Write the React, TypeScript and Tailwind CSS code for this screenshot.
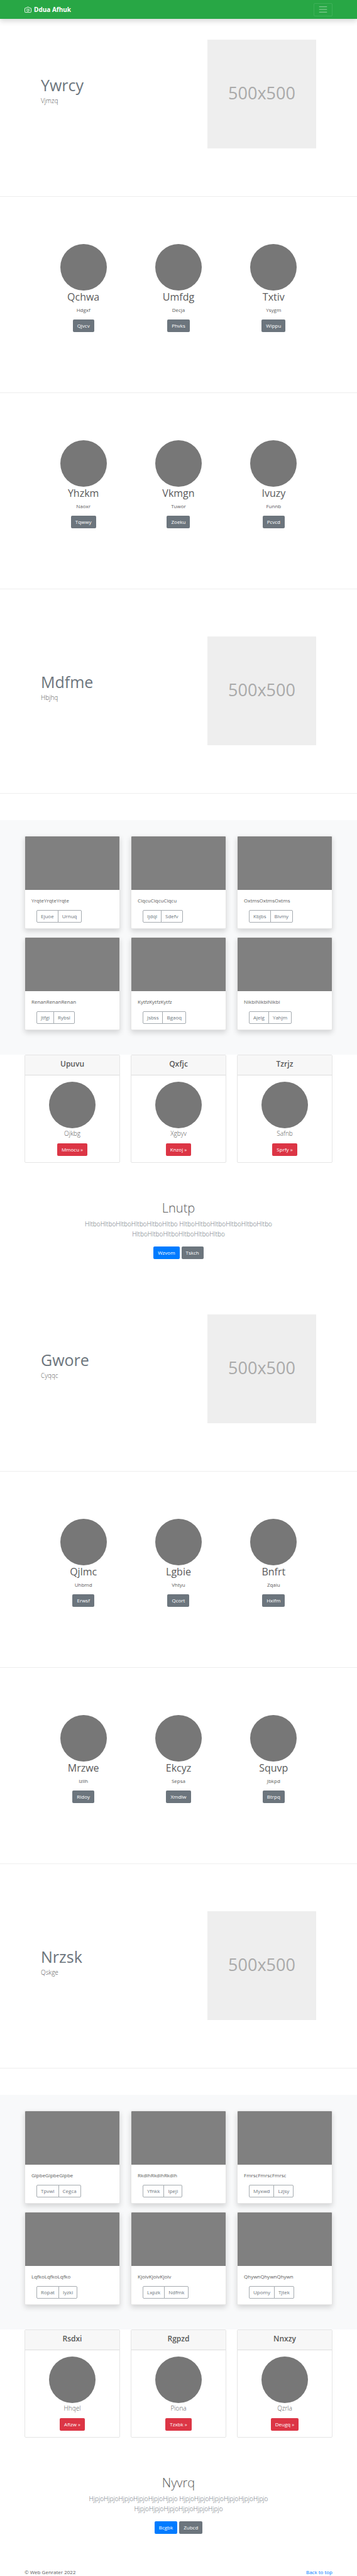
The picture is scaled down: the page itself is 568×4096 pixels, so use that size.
import React from "react";

type Person = { title: string; text: string; action: string };
type Tile = { text: string; view: string; edit: string };
type Message = { title: string; lines: string[]; primary: string; secondary: string };

type Block = {
  intro: { title: string; text: string };
  teams: Person[][];
  feature: { title: string; text: string };
  tiles: Tile[];
  plans: Person[];
  message: Message;
};

const blocks: Block[] = [
  {
    intro: { title: "Ywrcy", text: "Vjmzq" },
    teams: [
      [
        { title: "Qchwa", text: "Hdgxf", action: "Qjvcv" },
        { title: "Umfdg", text: "Decja", action: "Phvks" },
        { title: "Txtiv", text: "Ysygm", action: "Wippu" },
      ],
      [
        { title: "Yhzkm", text: "Naoxr", action: "Tqwwy" },
        { title: "Vkmgn", text: "Tuwor", action: "Zoeku" },
        { title: "Ivuzy", text: "Funnb", action: "Pcvcd" },
      ],
    ],
    feature: { title: "Mdfme", text: "Hbjhq" },
    tiles: [
      { text: "YrqteYrqteYrqte", view: "Ejuoe", edit: "Urnuq" },
      { text: "CiqcuCiqcuCiqcu", view: "Ijdql", edit: "Sdefv" },
      { text: "OxtmsOxtmsOxtms", view: "Kbjbs", edit: "Bivmy" },
      { text: "RenanRenanRenan", view: "Jtfgi", edit: "Rybsl" },
      { text: "KytfzKytfzKytfz", view: "Jsbss", edit: "Bgaoq" },
      { text: "NikbiNikbiNikbi", view: "Ajelg", edit: "Yahjm" },
    ],
    plans: [
      { title: "Upuvu", text: "Ojkbg", action: "Mmocu »" },
      { title: "Qxfjc", text: "Xgbyv", action: "Knzoj »" },
      { title: "Tzrjz", text: "Safnb", action: "Sprfy »" },
    ],
    message: {
      title: "Lnutp",
      lines: [
        "HltboHltboHltboHltboHltboHltbo",
        "HltboHltboHltboHltboHltboHltbo",
        "HltboHltboHltboHltboHltboHltbo",
      ],
      primary: "Wzvom",
      secondary: "Tskch",
    },
  },
  {
    intro: { title: "Gwore", text: "Cyqqc" },
    teams: [
      [
        { title: "Qjlmc", text: "Uhbmd", action: "Erwsf" },
        { title: "Lgbie", text: "Vhtyu", action: "Qcort" },
        { title: "Bnfrt", text: "Zqaiu", action: "Hxifm" },
      ],
      [
        { title: "Mrzwe", text: "Izllh", action: "Rldoy" },
        { title: "Ekcyz", text: "Sepsa", action: "Xmdlw" },
        { title: "Squvp", text: "Jbkpd", action: "Btrpq" },
      ],
    ],
    feature: { title: "Nrzsk", text: "Qskge" },
    tiles: [
      { text: "GlpbeGlpbeGlpbe", view: "Tpvwl", edit: "Cegca" },
      { text: "RkdihRkdihRkdih", view: "Yfnkk", edit: "Ipeji" },
      { text: "FmrscFmrscFmrsc", view: "Myxwd", edit: "Lzjsy" },
      { text: "LqfkoLqfkoLqfko", view: "Ropat", edit: "Iyzki" },
      { text: "KjoivKjoivKjoiv", view: "Lxpzk", edit: "Ndfmk" },
      { text: "QhywnQhywnQhywn", view: "Upomy", edit: "Tjtek" },
    ],
    plans: [
      { title: "Rsdxi", text: "Hhqel", action: "Afizw »" },
      { title: "Rgpzd", text: "Piona", action: "Tzxbk »" },
      { title: "Nnxzy", text: "Qzrla", action: "Deugq »" },
    ],
    message: {
      title: "Nyvrq",
      lines: [
        "HjpjoHjpjoHjpjoHjpjoHjpjoHjpjo",
        "HjpjoHjpjoHjpjoHjpjoHjpjoHjpjo",
        "HjpjoHjpjoHjpjoHjpjoHjpjoHjpjo",
      ],
      primary: "Bcgbk",
      secondary: "Zubcd",
    },
  },
];

const buttonTones = {
  gray: "bg-[#6c757d]",
  blue: "bg-[#007bff]",
  red: "bg-[#dc3545]",
};

function Button({ tone, children }: { tone: keyof typeof buttonTones; children: React.ReactNode }) {
  return (
    <button type="button" className={`h-5 rounded-[2px] px-[7px] text-[8px] leading-3 text-white ${buttonTones[tone]}`}>
      {children}
    </button>
  );
}

function Divider() {
  return <hr className="border-t border-[#eeeeee]" />;
}

function Circle() {
  return <div className="size-[74px] rounded-full bg-[#777777]" />;
}

function Header() {
  return (
    <header className="flex h-[30px] items-center justify-between bg-[#28a745] px-[39px] shadow-[0_4px_8px_rgba(0,0,0,0.15)]">
      <a href="#" className="flex items-center gap-1 text-[10px] leading-4 font-bold text-white">
        <svg
          viewBox="0 0 24 24"
          className="size-[11px]"
          fill="none"
          stroke="currentColor"
          strokeWidth="2"
          strokeLinecap="round"
          strokeLinejoin="round"
          aria-hidden="true"
        >
          <path d="M23 19a2 2 0 0 1-2 2H3a2 2 0 0 1-2-2V8a2 2 0 0 1 2-2h4l2-3h6l2 3h4a2 2 0 0 1 2 2z" />
          <circle cx="12" cy="13" r="4" />
        </svg>
        Ddua Afhuk
      </a>
      <button
        type="button"
        aria-label="Toggle navigation"
        className="flex h-[21px] w-[30px] items-center justify-center rounded-[2px] border border-white/10"
      >
        <svg viewBox="0 0 30 30" className="size-4" stroke="rgba(255,255,255,0.5)" strokeWidth="2" strokeLinecap="round">
          <path d="M4 7h22M4 15h22M4 23h22" />
        </svg>
      </button>
    </header>
  );
}

function Feature({ title, text, lead }: { title: string; text: string; lead?: boolean }) {
  return (
    <>
      <section className={`flex items-start justify-between pr-[65px] pb-[76px] pl-[65px] ${lead ? "pt-[33px]" : "pt-[75px]"}`}>
        <div className="pt-[57px]">
          <h2 className="mb-[2px] text-[25px] leading-[30px] text-[#6c757d]">{title}</h2>
          <p className="text-[10px] leading-4 font-light">{text}</p>
        </div>
        <div className="flex size-[173px] items-center justify-center bg-[#eeeeee] pb-1 text-[27px] leading-8 text-[#aaaaaa]">
          500x500
        </div>
      </section>
      <Divider />
    </>
  );
}

function Team({ people }: { people: Person[] }) {
  return (
    <>
      <section className="grid grid-cols-3 px-[57px] pt-[75px] pb-24">
        {people.map((p) => (
          <div key={p.title} className="flex flex-col items-center">
            <Circle />
            <h3 className="mb-1 text-[16px] leading-[21px]">{p.title}</h3>
            <p className="mb-[9px] text-[8px] leading-3">{p.text}</p>
            <Button tone="gray">{p.action}</Button>
          </div>
        ))}
      </section>
      <Divider />
    </>
  );
}

function Album({ tiles }: { tiles: Tile[] }) {
  return (
    <section className="mt-[42px] grid grid-cols-3 gap-x-[17px] gap-y-[13px] bg-[#f8f9fa] px-[39px] pt-[25px] pb-[39px]">
      {tiles.map((t) => (
        <article
          key={t.text}
          className="overflow-hidden rounded-[2px] border border-black/10 bg-white shadow-[0_4px_8px_rgba(0,0,0,0.15)]"
        >
          <div className="h-[85px] bg-[#808080]" />
          <div className="px-[10px] pt-[11px] pb-[9px]">
            <p className="mb-[9px] text-[8px] leading-3">{t.text}</p>
            <div className="ml-2 flex text-[8px] leading-3 text-[#6c757d]">
              <button type="button" className="h-5 rounded-l-[2px] border border-[#a5abb0] px-[6px]">
                {t.view}
              </button>
              <button type="button" className="-ml-px h-5 rounded-r-[2px] border border-[#a5abb0] px-[6px]">
                {t.edit}
              </button>
            </div>
          </div>
        </article>
      ))}
    </section>
  );
}

function Plans({ plans }: { plans: Person[] }) {
  return (
    <section className="grid grid-cols-3 gap-x-[17px] px-[39px]">
      {plans.map((p) => (
        <article key={p.title} className="overflow-hidden rounded-[2px] border border-black/10">
          <h4 className="border-b border-black/10 bg-[#f7f7f7] pt-[6px] pb-[10px] text-center text-[12px] leading-[15px] font-semibold">
            {p.title}
          </h4>
          <div className="flex flex-col items-center py-[10px]">
            <Circle />
            <p className="mb-2 text-[10px] leading-4 font-light">{p.text}</p>
            <Button tone="red">{p.action}</Button>
          </div>
        </article>
      ))}
    </section>
  );
}

function Hero({ title, lines, primary, secondary }: Message) {
  return (
    <section className="px-[130px] pt-[59px] pb-[55px] text-center">
      <h1 className="mb-1 text-[20px] leading-[26px] font-light">{title}</h1>
      <p className="mb-3 text-[10px] leading-4 font-light text-[#6c757d]">{lines.join(" ")}</p>
      <div className="flex justify-center gap-[3px]">
        <Button tone="blue">{primary}</Button>
        <Button tone="gray">{secondary}</Button>
      </div>
    </section>
  );
}

export default function App() {
  return (
    <div className="bg-white font-['Open_Sans','Noto_Sans',sans-serif] text-[#5a5a5a]">
      <Header />
      <main>
        {blocks.map((b) => (
          <React.Fragment key={b.intro.title}>
            <Feature {...b.intro} lead />
            {b.teams.map((people) => (
              <Team key={people[0].title} people={people} />
            ))}
            <Feature {...b.feature} />
            <Album tiles={b.tiles} />
            <Plans plans={b.plans} />
            <Hero {...b.message} />
          </React.Fragment>
        ))}
      </main>
      <footer className="flex justify-between px-[39px] text-[8px] leading-3">
        <p>© Web Genrater 2022</p>
        <a href="#" className="text-[#007bff]">
          Back to top
        </a>
      </footer>
    </div>
  );
}
